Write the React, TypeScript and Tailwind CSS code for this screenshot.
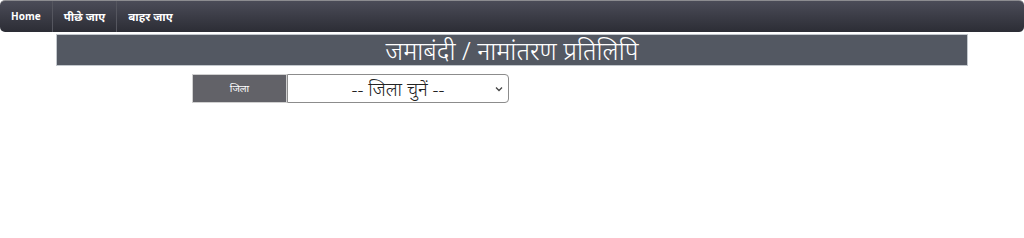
import React from 'react';

const navItems = ['Home', 'पीछे जाए', 'बाहर जाए'];

export default function App() {
    return (
        <div className="w-[1024px] h-[238px] bg-white font-['Noto_Sans','Liberation_Sans',sans-serif]">
            {/* Top navbar */}
            <div className="h-[32px] flex items-stretch rounded-[5px] border-t border-[#8c8c90] bg-gradient-to-b from-[#4b4c58] to-[#2c2d35]">
                {navItems.map((item, i) => (
                    <div
                        key={item}
                        className={`flex items-center px-[11px] font-bold text-white ${i === 0 ? 'text-[10px]' : 'text-[11.5px]'} ${i < navItems.length - 1 ? 'border-r border-[#55565f]' : ''}`}
                    >
                        {item}
                    </div>
                ))}
            </div>

            {/* Title */}
            <div className="mx-[56px] mt-[2px] h-[32px] flex items-center justify-center bg-[#535862] border border-[#c3c8cd] text-white text-[25px] font-light leading-none">
                जमाबंदी / नामांतरण प्रतिलिपि
            </div>

            {/* District select */}
            <div className="mt-[8px] ml-[192px] flex h-[29px] w-[317px]">
                <div className="w-[95px] flex items-center justify-center bg-[#626268] border border-[#d0d0d0] text-white text-[10px]">
                    जिला
                </div>
                <div className="flex-1 relative flex items-center justify-center border border-[#8c8c8c] rounded-r-[4px] bg-white text-[18.5px] font-light text-[#222]">
                    -- जिला चुनें --
                    <svg className="absolute right-[5px] top-1/2 -translate-y-1/2" width="8" height="6" viewBox="0 0 8 6" fill="none">
                        <path d="M1 1.5 L4 4.5 L7 1.5" stroke="#444" strokeWidth="1.3" />
                    </svg>
                </div>
            </div>
        </div>
    );
}
